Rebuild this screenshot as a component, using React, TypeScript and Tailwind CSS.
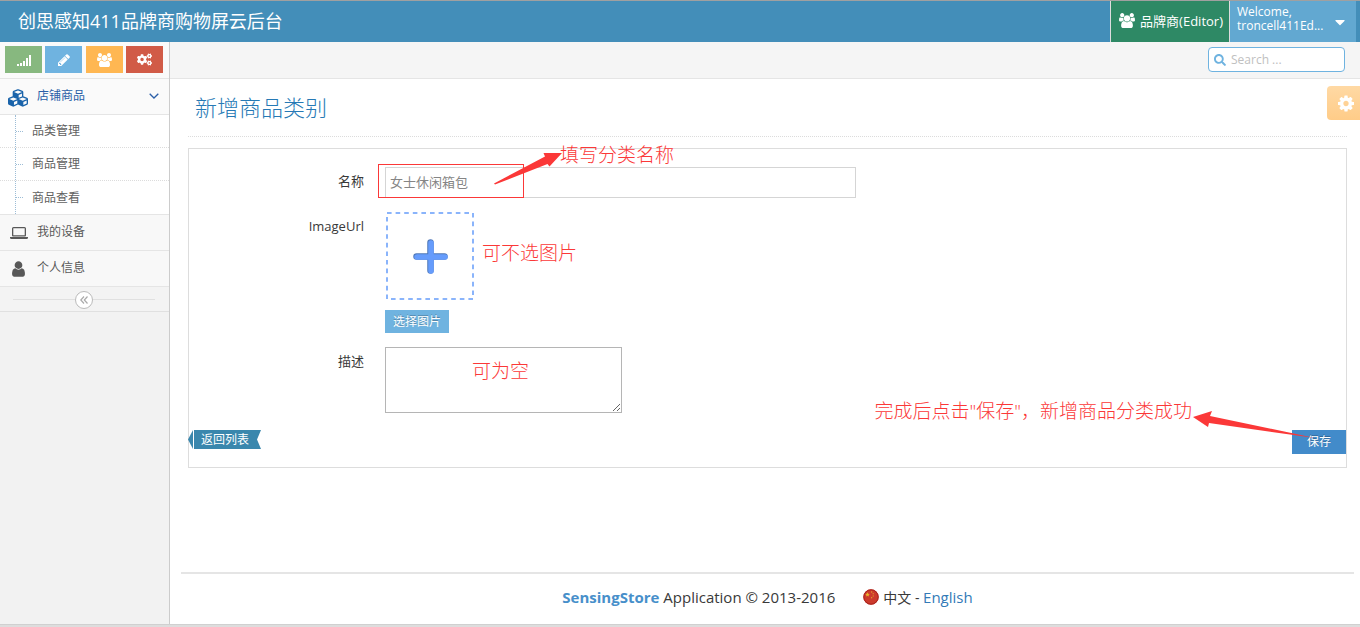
import type { ReactNode } from "react";
import { FaCogs, FaCubes, FaSearch, FaCaretDown } from "react-icons/fa";

const GROUP_PATH =
  "M593 896q-162 5-265 128h-134q-82 0-138-40.5t-56-118.5q0-353 124-353 6 0 43.5 21t97.5 42.5 119 21.5q67 0 133-23-5 37-5 66 0 139 81 256zM1664 1533q0 120-73 189.500t-194 69.500h-874q-121 0-194-69.500t-73-189.500q0-53 3.500-103.500t14-109 26.500-108.500 43-97.500 62-81 85.500-53.500 111.500-20q10 0 43 21.500t73 48 107 48 135 21.500 135-21.500 107-48 73-48 43-21.500q61 0 111.500 20t85.500 53.500 62 81 43 97.500 26.500 108.500 14 109 3.500 103.500zM640 256q0 106-75 181t-181 75-181-75-75-181 75-181 181-75 181 75 75 181zM1344 640q0 159-112.500 271.500t-271.500 112.500-271.500-112.500-112.500-271.500 112.500-271.500 271.500-112.500 271.500 112.500 112.500 271.500zM1920 865q0 78-56 118.500t-138 40.500h-134q-103-123-265-128 81-117 81-256 0-29-5-66 66 23 133 23 59 0 119-21.500t97.500-42.500 43.500-21q124 0 124 353zM1792 256q0 106-75 181t-181 75-181-75-75-181 75-181 181-75 181 75 75 181z";

const PENCIL_PATH =
  "M491 1536l91-91-235-235-91 91v107h128v128h107zM1014 608q0-22-22-22-10 0-17 7l-542 542q-7 7-7 17 0 22 22 22 10 0 17-7l542-542q7-7 7-17zM960 416l416 416-832 832h-416v-416zM1643 512q0 53-37 90l-166 166-416-416 166-165q36-38 90-38 53 0 91 38l235 234q37 39 37 91z";

const USER_PATH =
  "M1280 1399q0 109-62.500 187t-150.500 78h-854q-88 0-150.500-78t-62.500-187q0-85 8.500-160.500t31.500-152 58.500-131 94-89 134.500-34.500q131 128 313 128t313-128q76 0 134.500 34.500t94 89 58.500 131 31.500 152 8.500 160.500zM1024 512q0 159-112.500 271.500t-271.500 112.500-271.500-112.500-112.500-271.500 112.500-271.500 271.500-112.500 271.500 112.500 112.500 271.500z";

const COG_PATH =
  "M1024 896q0-106-75-181t-181-75-181 75-75 181 75 181 181 75 181-75 75-181zM1536 787v222q0 12-8 23t-20 13l-185 28q-19 54-39 91 35 50 107 138 10 12 10 25t-9 23q-27 37-99 108t-94 71q-12 0-26-9l-138-108q-44 23-91 38-16 136-29 186-7 28-36 28h-222q-14 0-24.500-8.500t-11.500-21.500l-28-184q-49-16-90-37l-141 107q-10 9-25 9-14 0-25-11-126-114-165-168-7-10-7-23 0-12 8-23 15-21 51-66.500t54-70.500q-27-50-41-99l-183-27q-13-2-21-12.500t-8-23.500v-222q0-12 8-23t19-13l186-28q14-46 39-92-40-57-107-138-10-12-10-24 0-10 9-23 26-36 98.500-107.500t94.500-71.500q13 0 26 10l138 107q44-23 91-38 16-136 29-186 7-28 36-28h222q14 0 24.500 8.500t11.500 21.500l28 184q49 16 90 37l142-107q9-9 24-9 13 0 25 10 129 119 165 170 7 8 7 22 0 12-8 23-15 21-51 66.500t-54 70.500q26 50 41 98l183 28q13 2 21 12.500t8 23.500z";

function GroupIcon({ className }: { className: string }) {
  return (
    <svg viewBox="0 0 1920 1792" className={className} fill="currentColor" aria-hidden="true">
      <path d={GROUP_PATH} />
    </svg>
  );
}

function SignalIcon() {
  return (
    <svg viewBox="0 0 14 12" className="h-3 w-3.5" fill="currentColor" aria-hidden="true">
      <path d="M0 10h2v2H0zM3 9h2v3H3zM6 7h2v5H6zM9 4h2v8H9zM12 1h2v11h-2z" />
    </svg>
  );
}

function Shortcut({ label, className, children }: { label: string; className: string; children: ReactNode }) {
  return (
    <button aria-label={label} className={`flex h-[27px] w-[37px] items-center justify-center text-white ${className}`}>
      {children}
    </button>
  );
}

function SubItem({ text, last }: { text: string; last?: boolean }) {
  return (
    <li className={`flex h-[33px] items-center ${last ? "" : "border-b border-dotted border-[#dcdcdc]"}`}>
      <span className="ml-[15px] h-full border-l border-dotted border-[#9dbdd6]" />
      <span className="mr-[9px] w-[7px] border-t border-dotted border-[#9dbdd6]" />
      <a href="#" className="text-xs leading-4 text-[#616161]">{text}</a>
    </li>
  );
}

function Sidebar() {
  return (
    <aside className="flex w-[170px] shrink-0 flex-col border-r border-[#ccc] bg-[#f2f2f2]">
      <div className="flex h-[37px] items-start justify-between border-b border-[#e5e5e5] bg-[#fafafa] pt-1 pr-1.5 pl-[5px]">
        <Shortcut label="统计" className="bg-[#87b87f]"><SignalIcon /></Shortcut>
        <Shortcut label="编辑" className="bg-[#6fb3e0]">
          <svg viewBox="0 0 1792 1792" className="size-3.5" fill="currentColor" aria-hidden="true"><path d={PENCIL_PATH} /></svg>
        </Shortcut>
        <Shortcut label="用户" className="bg-[#ffb752]"><GroupIcon className="h-3.5 w-[15px]" /></Shortcut>
        <Shortcut label="设置" className="bg-[#d15b47]"><FaCogs className="size-[15px]" /></Shortcut>
      </div>
      <nav>
        <a href="#" className="flex h-9 items-center border-b border-[#e5e5e5] bg-[#fafafa] pb-0.5 text-[#2b5fa8]">
          <FaCubes className="mt-1 ml-2 size-5 text-[#1963aa]" />
          <span className="ml-[9px] text-xs leading-4">店铺商品</span>
          <svg viewBox="0 0 10 6" className="mr-2.5 ml-auto h-1.5 w-2.5" fill="none" stroke="currentColor" strokeWidth="1.3" aria-hidden="true">
            <path d="M.7.7 5 5 9.300.7" />
          </svg>
        </a>
        <ul className="border-b border-[#e5e5e5] bg-white">
          <SubItem text="品类管理" />
          <SubItem text="商品管理" />
          <SubItem text="商品查看" last />
        </ul>
        <a href="#" className="flex h-9 items-center border-b border-[#e5e5e5] bg-[#f8f8f8] pb-0.5 text-[#585858]">
          <svg viewBox="0 0 18 12" className="mt-0.5 ml-2.5 h-3 w-[18px]" fill="currentColor" aria-hidden="true">
            <path fillRule="evenodd" d="M3.500 0h11Q16 0 16 1.500v7q0 1-1 1H3q-1 0-1-1v-7Q2 0 3.500 0zM3.300 1.200v7h11.400v-7zM0 10h18v.8q0 1.200-1.500 1.200h-15Q0 12 0 10.800z" />
          </svg>
          <span className="ml-[9px] text-xs leading-4">我的设备</span>
        </a>
        <a href="#" className="flex h-9 items-center border-b border-[#e5e5e5] bg-[#f8f8f8] pb-0.5 text-[#585858]">
          <svg viewBox="0 0 1280 1792" className="mt-0.5 ml-3 h-[18px] w-[13px]" fill="currentColor" aria-hidden="true"><path d={USER_PATH} /></svg>
          <span className="ml-3 text-xs leading-4">个人信息</span>
        </a>
      </nav>
      <div className="flex h-[25px] items-center border-b border-[#e0e0e0] bg-[#f3f3f3] pt-px pr-3.5 pl-[13px]">
        <span className="flex-1 border-t border-[#e0e0e0]" />
        <button aria-label="收起菜单" className="flex size-[18px] items-center justify-center rounded-full border border-[#bbb] bg-white text-[#aaa]">
          <svg viewBox="0 0 8 8" className="size-2" fill="none" stroke="currentColor" strokeWidth="1.2" aria-hidden="true">
            <path d="M4 .5.8 4 4 7.500M7.500.5 4.300 4l3.200 3.500" />
          </svg>
        </button>
        <span className="flex-1 border-t border-[#e0e0e0]" />
      </div>
    </aside>
  );
}

function Header() {
  return (
    <header className="flex h-[42px] items-stretch border-t border-[#a0a0a0] bg-[#438eb9] pr-1 text-white">
      <h1 className="flex items-center pb-0.5 pl-[18px] text-lg leading-6">创思感知411品牌商购物屏云后台</h1>
      <a href="#" className="ml-auto flex items-center border-l border-[#ddd] bg-[#2e8965] pr-1.5 pb-0.5 pl-2 text-[13px] leading-4">
        <GroupIcon className="mr-[5px] h-[15px] w-4" />
        品牌商(Editor)
      </a>
      <button className="flex w-[127px] items-center border-l border-[#ddd] bg-[#62a8d1] pl-[7px] text-left text-xs leading-[14px]">
        <span className="flex flex-col pb-1.5"><span>Welcome,</span><span>troncell411Ed...</span></span>
        <FaCaretDown className="mr-2 ml-auto size-4" />
      </button>
    </header>
  );
}

function Note({ className, children }: { className: string; children: ReactNode }) {
  return (
    <span className={`pointer-events-none absolute text-[19px] leading-6 font-light whitespace-nowrap text-[#fb3838] ${className}`}>
      {children}
    </span>
  );
}

function FieldLabel({ htmlFor, children }: { htmlFor: string; children: ReactNode }) {
  return (
    <label htmlFor={htmlFor} className="w-[175px] shrink-0 pt-1.5 text-right leading-4 text-[#393939]">{children}</label>
  );
}

function CategoryForm() {
  return (
    <form className="relative flex flex-col gap-3.5 border border-[#ddd] pt-[18px] pb-[13px] text-[13px]">
      <div className="flex gap-[21px]">
        <FieldLabel htmlFor="name">名称</FieldLabel>
        <div className="relative flex-1">
          <input id="name" defaultValue="女士休闲箱包" className="block h-[31px] w-[49%] border border-[#d5d5d5] px-1 pb-0.5 text-[13px] text-[#858585]" />
          <span className="pointer-events-none absolute -top-[3px] -left-[7px] h-[34px] w-[146px] border border-[#fb3838]" />
          <svg viewBox="0 0 70 34" className="pointer-events-none absolute -top-4 left-[109px] h-[34px] w-[70px]" fill="#fb3838" aria-hidden="true">
            <path d="M0 32.500 51 5.500 49.500 2H68L55.500 15.500 53.500 13 1 33.500z" />
          </svg>
          <Note className="-top-6 left-[175px]">填写分类名称</Note>
        </div>
      </div>
      <div className="flex gap-[21px]">
        <FieldLabel htmlFor="image">ImageUrl</FieldLabel>
        <div className="relative flex flex-1 flex-col items-start gap-[9px]">
          <svg viewBox="0 0 90 89" className="h-[89px] w-[90px]" aria-hidden="true">
            <rect x="2" y="1" width="86" height="86" fill="none" stroke="#8ab4fb" strokeWidth="2" strokeDasharray="4.600 4" />
            <path d="M45.500 30.500v28M31.500 44.500h28" stroke="#4f78b8" strokeWidth="6.500" strokeLinecap="round" />
            <path d="M46 31v28M32 45h28" stroke="#669cfc" strokeWidth="5.500" strokeLinecap="round" />
          </svg>
          <button id="image" type="button" className="h-[23px] bg-[#6fb3e0] px-2 text-xs leading-4 text-white [text-shadow:0_-1px_0_rgba(0,0,0,0.25)]">
            选择图片
          </button>
          <Note className="top-[29px] left-[97px]">可不选图片</Note>
        </div>
      </div>
      <div className="flex gap-[21px]">
        <FieldLabel htmlFor="description">描述</FieldLabel>
        <div className="relative flex-1">
          <textarea id="description" className="block h-[66px] w-[237px] resize border border-[#b5b5b5] p-1" />
          <Note className="top-3 left-[87px]">可为空</Note>
        </div>
      </div>
      <div className="mt-[3px] flex items-start justify-between">
        <a href="#" className="relative -ml-px flex h-[19px] items-center text-xs leading-4 text-white">
          <svg viewBox="0 0 5 19" className="mr-px h-[19px] w-[5px]" fill="#3a87ad" aria-hidden="true"><path d="M5 0v19L0 9.500z" /></svg>
          <span className="flex h-full items-center bg-[#3a87ad] pl-[7px]">返回列表</span>
          <svg viewBox="0 0 12 19" className="h-[19px] w-3" fill="#3a87ad" aria-hidden="true"><path d="M0 0h12L8 9.500l4 9.500H0z" /></svg>
        </a>
        <button type="submit" className="h-6 bg-[#428bca] px-[15px] text-xs leading-4 text-white [text-shadow:0_-1px_0_rgba(0,0,0,0.25)]">
          保存
        </button>
      </div>
      <Note className="right-[154px] bottom-11">完成后点击"保存"，新增商品分类成功</Note>
      <svg viewBox="0 0 122 28" className="pointer-events-none absolute right-[31px] bottom-[28px] h-7 w-[122px]" fill="#fb3838" aria-hidden="true">
        <path d="M0 6 19 0l-2 5 105 22-106-15-1 4z" />
      </svg>
    </form>
  );
}

function Footer() {
  return (
    <footer className="mx-1.5 mt-auto ml-[11px] flex h-[52px] items-center justify-center border-t-2 border-[#e5e5e5] pb-1 text-[15px] leading-5 text-[#393939]">
      <span><strong className="text-[#478fca]">SensingStore</strong> Application © 2013-2016</span>
      <span className="ml-7 flex items-center">
        <svg viewBox="0 0 16 16" className="mr-1 size-4" aria-hidden="true">
          <circle cx="8" cy="8" r="7.700" fill="#cc3a2c" />
          <circle cx="8" cy="8" r="7.200" fill="none" stroke="#a8231c" />
          <path d="m4.500 3.300.7 1.500 1.600.1-1.200 1.100.4 1.600-1.500-.9-1.400.9.300-1.600-1.100-1.100 1.500-.1zM8 2.500h1.200v1H8zM9.700 4.200h1v1h-1zM9.700 6.500h1v1h-1zM8 8.200h1.200v1H8z" fill="#e8b52c" />
        </svg>
        <span className="text-sm leading-5">中文 - <a href="#" className="text-[15px] text-[#337ab7]">English</a></span>
      </span>
    </footer>
  );
}

export default function App() {
  return (
    <div className="flex min-h-screen flex-col bg-white font-['Open_Sans','Noto_Sans_CJK_SC',sans-serif]">
      <Header />
      <div className="flex flex-1">
        <Sidebar />
        <main className="relative flex min-w-0 flex-1 flex-col">
          <div className="flex h-[37px] items-center justify-end border-b border-[#e5e5e5] bg-[#f5f5f5] pr-[15px] pb-px">
            <label className="flex h-[25px] w-[137px] items-center rounded border border-[#6fb3e0] bg-white pl-[5px]">
              <FaSearch className="size-3 shrink-0 text-[#6fb3e0]" />
              <input type="search" aria-label="Search" placeholder="Search ..." className="ml-[5px] w-full min-w-0 text-xs leading-4 text-[#858585] outline-none placeholder:text-[#c0c0c0]" />
            </label>
          </div>
          <button aria-label="页面设置" className="absolute top-11 right-0 flex h-[34px] w-[33px] items-center justify-center rounded-l bg-linear-to-b from-[#ffd9a4] to-[#ffcc88] pl-1 text-white">
            <svg viewBox="0 0 1536 1792" className="h-[19px] w-4" fill="currentColor" aria-hidden="true"><path d={COG_PATH} /></svg>
          </button>
          <div className="pr-[13px] pl-[18px]">
            <h2 className="mb-[11px] flex h-[58px] items-center border-b border-dotted border-[#dcdcdc] pb-0.5 pl-[7px] text-[22px] leading-7 font-light text-[#2679b5]">新增商品类别</h2>
            <CategoryForm />
          </div>
          <Footer />
        </main>
      </div>
      <div className="h-[3px] border-t border-[#d0d0d0] bg-[#ddd]" />
    </div>
  );
}
